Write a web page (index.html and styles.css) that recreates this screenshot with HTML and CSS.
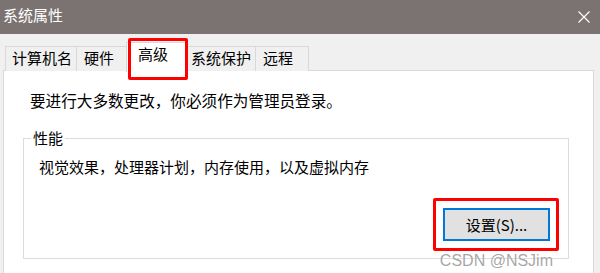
FILE: index.html
```html
<!DOCTYPE html>
<html lang="zh-CN">
<head>
<meta charset="utf-8">
<title>系统属性</title>
<link rel="stylesheet" href="styles.css">
</head>
<body>
<div class="window">
  <div class="titlebar">
    <span class="title">系统属性</span>
    <svg class="close" width="12" height="12" viewBox="0 0 12 12"><path d="M0.5 0.5 L11.5 11.5 M11.5 0.5 L0.5 11.5" stroke="#fff" stroke-width="1.2" fill="none"/></svg>
  </div>
  <div class="tabs">
    <div class="tab t1">计算机名</div>
    <div class="tab t2">硬件</div>
    <div class="tab t3 active">高级</div>
    <div class="tab t4">系统保护</div>
    <div class="tab t5">远程</div>
  </div>
  <div class="panel">
    <p class="intro">要进行大多数更改，你必须作为管理员登录。</p>
    <div class="group">
      <span class="legend">性能</span>
      <p class="desc">视觉效果，处理器计划，内存使用，以及虚拟内存</p>
      <div class="btnwrap"><button class="btn">设置(S)...</button></div>
    </div>
  </div>
  <div class="watermark">CSDN @NSJim</div>
</div>
</body>
</html>
```

FILE: styles.css
```css
* { box-sizing: border-box; }
html, body { margin: 0; padding: 0; }
body {
  width: 600px;
  height: 273px;
  overflow: hidden;
  background: #f0f0f0;
  font-family: "Noto Sans CJK SC", "Noto Sans", sans-serif;
  font-size: 15px;
  color: #000;
}
.window { position: relative; width: 600px; height: 273px; overflow: hidden; }
.titlebar {
  height: 34px;
  background: #7b7372;
  display: flex;
  align-items: center;
  justify-content: space-between;
  padding: 0 10px 0 3px;
  color: #fff;
}
.title { font-size: 15px; line-height: 20px; margin-top: -4px; }
.close { display: block; }
.tabs {
  display: flex;
  height: 25px;
  margin-top: 12px;
  padding-left: 5px;
  position: relative;
  z-index: 2;
}
.tab {
  height: 25px;
  border: 1px solid #d9d9d9;
  border-bottom: none;
  border-right: none;
  background: #f0f0f0;
  line-height: 22px;
  font-size: 15px;
  padding-left: 6px;
  white-space: nowrap;
}
.t1 { width: 71px; }
.t2 { width: 50px; padding-left: 7px; }
.t3 { width: 61px; }
.t4 { width: 68px; padding-left: 4px; }
.t5 { width: 54px; padding-left: 7px; border-right: 1px solid #d9d9d9; }
.tab.active {
  background: #fff;
  height: 30px;
  margin-top: -4px;
  line-height: 22px;
  padding-left: 11px;
  position: relative;
  border-right: 1px solid #d9d9d9;
}
.tab.active + .tab { border-left: none; }
.tab.active::after {
  content: "";
  position: absolute;
  left: 1px;
  top: -5px;
  width: 54px;
  height: 36px;
  border: 3.5px solid #f00;
  border-radius: 2px;
}
.panel {
  margin: -1px 6px 0 3px;
  height: 203px;
  background: #fff;
  border: 1px solid #d9d9d9;
  border-bottom: none;
  padding-top: 19px;
  position: relative;
  z-index: 1;
}
.intro {
  margin: 0 0 0 26px;
  line-height: 20px;
  font-size: 15.6px;
  color: #000;
}
.group {
  position: relative;
  margin: 28px 0 0 19px;
  width: 546px;
  height: 121px;
  border: 1px solid #dcdcdc;
  display: flex;
  flex-direction: column;
  padding: 18px 18px 17px 15px;
}
.legend {
  position: absolute;
  left: 7px;
  top: -11px;
  background: #fff;
  padding: 0 2px;
  line-height: 20px;
  font-size: 15px;
}
.desc {
  margin: 0;
  line-height: 20px;
  font-size: 15px;
}
.btnwrap {
  margin-top: auto;
  align-self: flex-end;
  position: relative;
}
.btnwrap::after {
  content: "";
  position: absolute;
  left: -10px;
  right: -9px;
  top: -10px;
  bottom: -10px;
  border: 3.5px solid #f00;
  border-radius: 2px;
}
.btn {
  display: block;
  width: 107px;
  height: 33px;
  background: #e1e1e1;
  border: 2px solid #0078d7;
  font-family: "Noto Sans CJK SC", "Noto Sans", sans-serif;
  font-size: 15px;
  color: #000;
  padding: 0;
  line-height: 28px;
}
.watermark {
  position: absolute;
  right: 47px;
  bottom: 3px;
  z-index: 3;
  font-family: "Liberation Sans", Arial, sans-serif;
  font-size: 16px;
  color: rgba(150, 150, 150, 0.85);
  text-shadow: 0 0 1px #fff;
}
```
